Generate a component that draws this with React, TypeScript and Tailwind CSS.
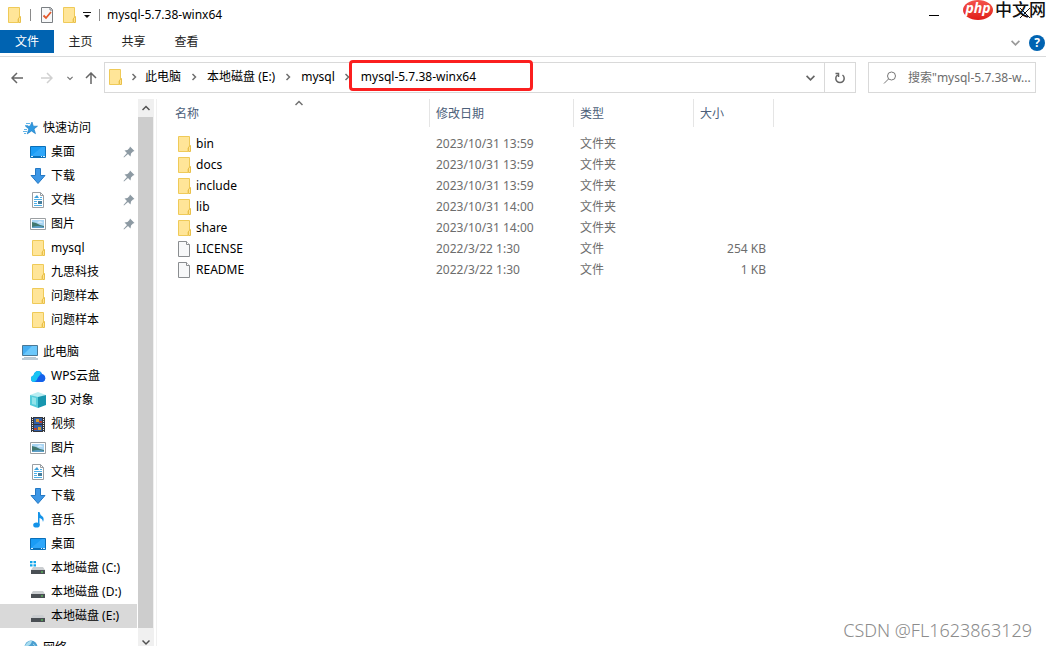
import type { ReactNode } from "react";

type IconName =
	| "star"
	| "desktop"
	| "download"
	| "document"
	| "picture"
	| "folder"
	| "computer"
	| "cloud"
	| "cube"
	| "video"
	| "music"
	| "system"
	| "drive"
	| "network"
	| "file"
	| "check";

const shapes: Record<IconName, ReactNode> = {
	folder: (
		<>
			<path d="M2.500 .5h11v10.500l-1.500 1v3.500h-9.500z" fill="#ffe598" stroke="#efca58" />
			<path d="M12.500 15.500V11l2-1.500v6z" fill="#ffe391" stroke="#e9c04a" />
		</>
	),
	file: (
		<>
			<path d="M2.500 .5h8l3 3v12h-11z" fill="#f7f8f9" stroke="#8a8d90" />
			<path d="M10.500 .5v3h3" fill="#fff" stroke="#8a8d90" />
		</>
	),
	check: (
		<>
			<path d="M2.500 .5h9l2 2v13h-11z" fill="#f7f8f9" stroke="#7b7f83" />
			<path d="M11 1v2h2" fill="none" stroke="#7b7f83" />
			<path d="M4.500 8.500l2.500 2.500 5-6" fill="none" stroke="#e2582b" strokeWidth="1.800" />
		</>
	),
	star: (
		<>
			<path
				d="M10 2l1.300 4.200h4.200l-3.500 2.700 1.500 4.800-4-2.700-4.300 2.900 1.600-5-3.300-2.700h4.500z"
				fill="#2f9ae2"
				stroke="#1979c0"
				strokeWidth=".6"
			/>
			<path d="M4 3.500h4M3 5.500h3M2 9.500h3M1 11.500h4M2 13.500h2" stroke="#62b4e8" />
		</>
	),
	desktop: (
		<>
			<path d="M.5 2.500h15v11h-15z" fill="#1a9cf5" stroke="#0a6fb8" />
			<path d="M1 12L12 3h3v9z" fill="#2fa7fa" />
			<path d="M1 12.500h14" stroke="#0a6fb8" />
			<path d="M1 12.500h2M11 12.500h1M13 12.500h2" stroke="#d9f0ff" />
		</>
	),
	download: (
		<path d="M5.500 .5h5v7h4.500L8 15.500 1 7.500h4.500z" fill="#3d97e6" stroke="#2478c4" />
	),
	document: (
		<>
			<path d="M2.500 .5h8l3 3v12h-11z" fill="#fff" stroke="#9a9fa3" />
			<path d="M10.500 .5v3h3" fill="none" stroke="#9a9fa3" />
			<path d="M4 7.500h8M4 9.500h3M4 11.500h3M4 13.500h8M10 5.500h2" stroke="#4db0e8" />
			<path d="M4 6l3-3 2 3z" fill="#3c9fd9" />
			<path d="M8 9h4v3H8z" fill="#477f9e" />
		</>
	),
	picture: (
		<>
			<path d="M.5 2.500h15v11h-15z" fill="#fff" stroke="#9b9fa2" />
			<path d="M2 4h12v8H2z" fill="#a9d5f3" />
			<path d="M2 6l4 1 4 2 4 1v2H2z" fill="#41786f" />
			<path d="M2 11q6-2 12 0v1H2z" fill="#5d9fc8" />
			<path d="M7 6.500q3-2 6 0z" fill="#fff" />
		</>
	),
	computer: (
		<>
			<path d="M.5 1.500h15v10h-15z" fill="#45aef2" stroke="#4b7895" />
			<path d="M1 11L10 2h5v9z" fill="#6cc8fb" />
			<path d="M2 13.500h12" stroke="#b6c6d1" />
			<path d="M0 15h16" stroke="#7a98ad" />
		</>
	),
	cloud: (
		<>
			<path d="M4 14a3.300 3.300 0 01-.5-6.500C4 4.500 6 3 8 3s3.500 1 4.200 3.200A4 4 0 0112 14z" fill="#147df5" />
			<path d="M4 14a3.300 3.300 0 01-.5-6.500C4 4.500 6 3 8 3q1.500 0 2.500 1Q11 9 4 14z" fill="#19c4f3" />
			<path d="M8 9.500q1.500-3 4.200-3.300A4 4 0 0112 14H6z" fill="#1560ea" />
		</>
	),
	cube: (
		<>
			<path d="M0 3l8-3 8 3-8 3z" fill="#b8edf2" />
			<path d="M0 3l8 2v11l-8-3z" fill="#55cddb" />
			<path d="M16 3L8 5v11l8-3z" fill="#1796af" />
			<path d="M2 5l4 1v7l-4-1z" fill="#90e3ea" />
		</>
	),
	video: (
		<>
			<path d="M1 1h14v15H1z" fill="#33363b" />
			<path d="M2.500 1v15M13.500 1v15" stroke="#e8eaec" strokeDasharray="1 1" />
			<path d="M4 2h8v6H4zM4 9h8v6H4z" fill="#315fa8" />
			<path d="M6 3h3v3H6zM8 11h3v3H8z" fill="#d49b32" />
			<path d="M9 5h3v2H9zM4 12h3v2H4z" fill="#b63d2e" />
		</>
	),
	music: (
		<>
			<path d="M8 0h1.500q.5 3 3 4.500 2 2 .5 5.500Q12.500 6.500 9.500 6v7H8z" fill="#1493e8" />
			<ellipse cx="6.500" cy="13" rx="3.300" ry="2.600" fill="#1493e8" />
		</>
	),
	system: (
		<>
			<path d="M0 1h2.500v2.300H0zM3.500 1H6v2.300H3.500zM0 4.300h2.500v2.300H0zM3.500 4.300H6v2.300H3.500z" fill="#10a5ea" />
			<path d="M3 7h10l2 3H1z" fill="#cbced1" />
			<path d="M1 10h14v4H1z" fill="#4a4f54" />
			<path d="M11 12h2" stroke="#5fe05b" />
		</>
	),
	drive: (
		<>
			<path d="M3 7h10l2 3H1z" fill="#cbced1" />
			<path d="M1 10h14v4H1z" fill="#4a4f54" />
			<path d="M11 12h2" stroke="#5fe05b" />
		</>
	),
	network: (
		<>
			<circle cx="9" cy="7" r="6.500" fill="#4b9fd0" />
			<path d="M4 4q3-4 6-3-1 4-4 5-1 3-2 5-3-3 0-7z" fill="#a9ddf0" />
			<path d="M11 4q4 2 2 7" fill="none" stroke="#a9ddf0" />
			<path d="M1 8h8v6H1z" fill="#3a7fb4" />
		</>
	),
};

function Icon({ name }: { name: IconName }) {
	return (
		<svg viewBox="0 0 16 16" className="size-4 shrink-0" aria-hidden="true">
			{shapes[name]}
		</svg>
	);
}

interface ChevronProps {
	d: string;
	className?: string;
}

function Chevron({ d, className = "size-2 text-[#707070]" }: ChevronProps) {
	return (
		<svg viewBox="0 0 8 8" className={className} fill="none" stroke="currentColor" strokeWidth="1.500" aria-hidden="true">
			<path d={d} />
		</svg>
	);
}

const UP = "M0.500 6L4 2.500L7.500 6";
const DOWN = "M0.500 2.500L4 6L7.500 2.500";
const RIGHT = "M2.500 1L5.500 4L2.500 7";

function Pin() {
	return (
		<svg viewBox="0 0 12 12" className="size-3" aria-hidden="true">
			<path d="M7 .5L11.500 5 10 5.500 8 7.500 7.500 10.500 5 8 1 11.500.5 11 4 7 1.500 4.500 4.500 4 6.500 2z" fill="#8d9aa3" />
		</svg>
	);
}

interface SideItem {
	icon: IconName;
	label: string;
	pinned?: boolean;
	selected?: boolean;
}

const groups: { root: SideItem; items: SideItem[] }[] = [
	{
		root: { icon: "star", label: "快速访问" },
		items: [
			{ icon: "desktop", label: "桌面", pinned: true },
			{ icon: "download", label: "下载", pinned: true },
			{ icon: "document", label: "文档", pinned: true },
			{ icon: "picture", label: "图片", pinned: true },
			{ icon: "folder", label: "mysql" },
			{ icon: "folder", label: "九思科技" },
			{ icon: "folder", label: "问题样本" },
			{ icon: "folder", label: "问题样本" },
		],
	},
	{
		root: { icon: "computer", label: "此电脑" },
		items: [
			{ icon: "cloud", label: "WPS云盘" },
			{ icon: "cube", label: "3D 对象" },
			{ icon: "video", label: "视频" },
			{ icon: "picture", label: "图片" },
			{ icon: "document", label: "文档" },
			{ icon: "download", label: "下载" },
			{ icon: "music", label: "音乐" },
			{ icon: "desktop", label: "桌面" },
			{ icon: "system", label: "本地磁盘 (C:)" },
			{ icon: "drive", label: "本地磁盘 (D:)" },
			{ icon: "drive", label: "本地磁盘 (E:)", selected: true },
		],
	},
	{ root: { icon: "network", label: "网络" }, items: [] },
];

const files: { name: string; date: string; type: string; size?: string }[] = [
	{ name: "bin", date: "2023/10/31 13:59", type: "文件夹" },
	{ name: "docs", date: "2023/10/31 13:59", type: "文件夹" },
	{ name: "include", date: "2023/10/31 13:59", type: "文件夹" },
	{ name: "lib", date: "2023/10/31 14:00", type: "文件夹" },
	{ name: "share", date: "2023/10/31 14:00", type: "文件夹" },
	{ name: "LICENSE", date: "2022/3/22 1:30", type: "文件", size: "254 KB" },
	{ name: "README", date: "2022/3/22 1:30", type: "文件", size: "1 KB" },
];

function TitleBar() {
	return (
		<header className="relative flex h-[30px] shrink-0 items-center pl-[6px]">
			<Icon name="folder" />
			<span className="ml-2 h-3 w-px bg-[#8a8a8a]" />
			<button aria-label="属性" className="ml-2">
				<Icon name="check" />
			</button>
			<button aria-label="新建文件夹" className="ml-[6px]">
				<Icon name="folder" />
			</button>
			<button aria-label="自定义快速访问工具栏" className="ml-[6px]">
				<svg viewBox="0 0 8 8" className="size-2" aria-hidden="true">
					<path d="M0 1.500h8" stroke="#111" />
					<path d="M1 4h6L4 7z" fill="#111" />
				</svg>
			</button>
			<span className="ml-2 h-3 w-px bg-[#8a8a8a]" />
			<h1 className="ml-[7px]">mysql-5.7.38-winx64</h1>
			<button aria-label="最小化" className="mr-[107px] ml-auto h-px w-[10px] bg-black" />
			<div className="absolute top-0 right-0 flex h-5 items-center gap-[2px]">
				<span className="flex h-5 w-[30px] items-center justify-center rounded-[50%] bg-linear-to-b from-[#f4524a] to-[#e01b17] pb-1 text-sm leading-none font-bold text-white italic">
					php
				</span>
				<span className="text-[17px] leading-5 font-medium text-[#111]">中文网</span>
			</div>
			<button aria-label="关闭" className="absolute top-2 right-4">
				<svg viewBox="0 0 10 10" className="size-[10px]" stroke="#111" aria-hidden="true">
					<path d="M0 0l10 10M10 0L0 10" />
				</svg>
			</button>
		</header>
	);
}

function RibbonTabs() {
	return (
		<nav className="flex h-[27px] shrink-0 items-start border-b border-[#dadbdc] pr-px text-[#222]">
			<button className="h-[23px] w-[54px] bg-[#0063b1] pt-px text-white">文件</button>
			<button className="h-[23px] w-[53px] pt-px">主页</button>
			<button className="h-[23px] w-[53px] pt-px">共享</button>
			<button className="h-[23px] w-[53px] pt-px">查看</button>
			<button aria-label="展开功能区" className="mt-2 ml-auto">
				<Chevron d={DOWN} className="size-[9px] text-[#9a9a9a]" />
			</button>
			<button
				aria-label="帮助"
				className="mt-[5px] ml-[9px] flex size-4 items-center justify-center rounded-full bg-[#0063b1] font-bold text-white"
			>
				?
			</button>
		</nav>
	);
}

function AddressBar() {
	return (
		<div className="flex shrink-0 pt-[5px] pr-[10px] pb-[6px]">
			<div className="flex w-[104px] shrink-0 items-center pl-[11px] text-[#666]">
				<button aria-label="后退">
					<svg viewBox="0 0 12 12" className="size-3" fill="none" stroke="currentColor" strokeWidth="1.500">
						<path d="M12 6H1M6 1L1 6l5 5" />
					</svg>
				</button>
				<button aria-label="前进" className="ml-[18px] text-[#d0d0d0]">
					<svg viewBox="0 0 12 12" className="size-3" fill="none" stroke="currentColor" strokeWidth="1.500">
						<path d="M0 6h11M6 1l5 5-5 5" />
					</svg>
				</button>
				<button aria-label="最近浏览的位置" className="ml-[14px]">
					<Chevron d={DOWN} className="size-[6px] text-[#707070]" />
				</button>
				<button aria-label="上移" className="ml-3">
					<svg viewBox="0 0 12 12" className="size-3" fill="none" stroke="currentColor" strokeWidth="1.500">
						<path d="M6 12V1M1 6l5-5 5 5" />
					</svg>
				</button>
			</div>
			<div className="flex h-[31px] min-w-0 flex-1 border border-[#d9d9d9]">
				<div className="flex min-w-0 flex-1 items-center pb-px pl-[2px]">
					<Icon name="folder" />
					<span className="flex w-[22px] justify-center">
						<Chevron d={RIGHT} />
					</span>
					<button>此电脑</button>
					<span className="flex w-[26px] justify-center">
						<Chevron d={RIGHT} />
					</span>
					<button>本地磁盘 (E:)</button>
					<span className="flex w-[26px] justify-center">
						<Chevron d={RIGHT} />
					</span>
					<button>mysql</button>
					<span className="flex w-4 justify-end">
						<Chevron d={RIGHT} />
					</span>
					<div className="-mt-[3px] -ml-[2px] flex h-[31px] w-[184px] items-center self-start rounded-sm border-3 border-[#fb1f1f] bg-white pt-[2px] pl-[9px]">
						<button>mysql-5.7.38-winx64</button>
					</div>
				</div>
				<button aria-label="以前的位置" className="flex w-7 items-center justify-center">
					<Chevron d={DOWN} className="size-[9px] text-[#666]" />
				</button>
				<button aria-label="刷新" className="flex w-[31px] items-center justify-center border-l border-[#d9d9d9]">
					<svg viewBox="0 0 12 12" className="size-3" fill="none" stroke="#666" strokeWidth="1.500">
						<path d="M8.500 3A4.200 4.200 0 113.500 3M1.500 1.500h3v3.500" />
					</svg>
				</button>
			</div>
			<label className="ml-3 flex h-[31px] w-[168px] shrink-0 items-center border border-[#d9d9d9] pl-[14px]">
				<svg viewBox="0 0 14 14" className="size-[14px] shrink-0" fill="none" stroke="#777" aria-label="搜索">
					<circle cx="8.500" cy="5" r="4" />
					<path d="M5.500 8L1 12.500" />
				</svg>
				<input
					type="text"
					placeholder={'搜索"mysql-5.7.38-w...'}
					className="ml-[11px] w-full min-w-0 outline-none placeholder:text-[#6d6d6d]"
				/>
			</label>
		</div>
	);
}

function SideRow({ item, root }: { item: SideItem; root?: boolean }) {
	return (
		<a
			href="#"
			className={`mr-px flex h-6 items-center gap-[5px] whitespace-nowrap ${root ? "pl-[22px]" : "pl-[30px]"} ${item.selected ? "bg-[#d9d9d9]" : ""}`}
		>
			<Icon name={item.icon} />
			{item.label}
			{item.pinned && (
				<span className="mr-[2px] ml-auto">
					<Pin />
				</span>
			)}
		</a>
	);
}

function Sidebar() {
	return (
		<aside className="flex shrink-0 border-r border-[#f0f0f0] pr-[2px]">
			<nav className="flex w-[138px] flex-col gap-2 overflow-hidden pt-[17px]">
				{groups.map((group) => (
					<div key={group.root.label}>
						<SideRow item={group.root} root />
						{group.items.map((item, i) => (
							<SideRow key={i} item={item} />
						))}
					</div>
				))}
			</nav>
			<div className="flex w-4 flex-col bg-[#f0f0f0]">
				<button aria-label="向上滚动" className="flex h-[18px] items-center justify-center">
					<Chevron d={UP} className="size-2 text-[#505050]" />
				</button>
				<div className="mr-px flex-1 bg-[#cdcdcd]" />
				<button aria-label="向下滚动" className="flex h-[18px] items-end justify-center">
					<Chevron d={DOWN} className="size-2 text-[#505050]" />
				</button>
			</div>
		</aside>
	);
}

function FileTable() {
	const head = "flex h-7 items-center border-r border-[#e5e5e5] pt-[2px] pl-[6px]";
	return (
		<main className="relative min-w-0 flex-1">
			<span className="absolute top-0 left-[138px]">
				<Chevron d={UP} className="size-2 text-[#707070]" />
			</span>
			<table className="table-fixed text-left">
				<colgroup>
					<col className="w-[273px]" />
					<col className="w-[144px]" />
					<col className="w-[120px]" />
					<col className="w-[80px]" />
				</colgroup>
				<thead className="text-[#4c607a]">
					<tr>
						<th className="pb-[6px] font-normal">
							<div className="flex h-7 items-center border-r border-[#e5e5e5] pt-[2px] pl-[18px]">名称</div>
						</th>
						<th className="pb-[6px] font-normal">
							<div className={head}>修改日期</div>
						</th>
						<th className="pb-[6px] font-normal">
							<div className={head}>类型</div>
						</th>
						<th className="pb-[6px] font-normal">
							<div className={head}>大小</div>
						</th>
					</tr>
				</thead>
				<tbody className="text-[#6d6d6d]">
					{files.map((file) => (
						<tr key={file.name} className="h-[21px]">
							<td className="text-black">
								<div className="flex items-center gap-1 pl-[19px]">
									<Icon name={file.size ? "file" : "folder"} />
									{file.name}
								</div>
							</td>
							<td className="pl-[6px]">{file.date}</td>
							<td className="pl-[6px]">{file.type}</td>
							<td className="pr-2 text-right">{file.size}</td>
						</tr>
					))}
				</tbody>
			</table>
		</main>
	);
}

export default function App() {
	return (
		<div className="relative flex h-screen flex-col overflow-hidden bg-white font-['Noto_Sans','Noto_Sans_CJK_SC',sans-serif] text-xs text-black">
			<TitleBar />
			<RibbonTabs />
			<AddressBar />
			<div className="flex min-h-0 flex-1">
				<Sidebar />
				<FileTable />
			</div>
			<p className="absolute right-[14px] bottom-[2px] text-lg font-light text-[#8c8c8c]">CSDN @FL1623863129</p>
		</div>
	);
}
